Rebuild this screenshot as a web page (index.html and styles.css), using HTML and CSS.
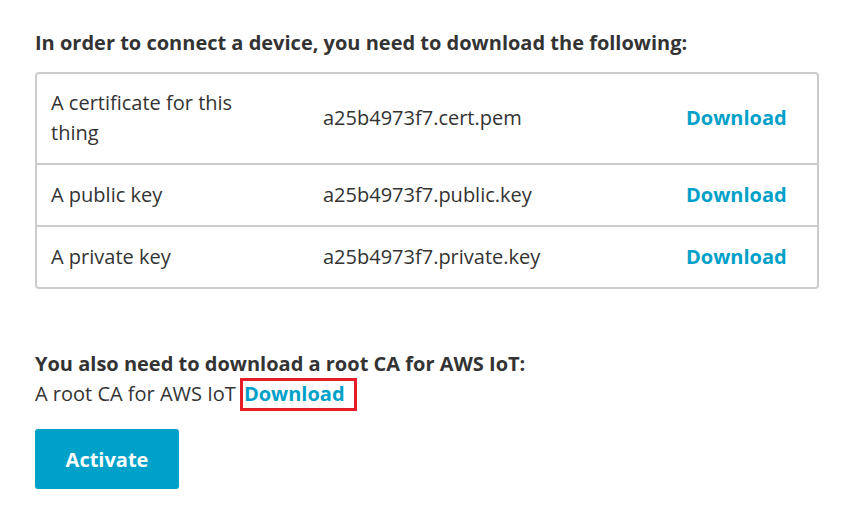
FILE: index.html
```html
<!DOCTYPE html>
<html>
<head>
<meta charset="utf-8">
<link rel="stylesheet" href="styles.css">
</head>
<body>
<div class="page">
  <h2 class="title">In order to connect a device, you need to download the following:</h2>
  <div class="files">
    <div class="row">
      <div class="cell name">A certificate for this thing</div>
      <div class="cell file">a25b4973f7.cert.pem</div>
      <div class="cell act"><a class="link">Download</a></div>
    </div>
    <div class="row">
      <div class="cell name">A public key</div>
      <div class="cell file">a25b4973f7.public.key</div>
      <div class="cell act"><a class="link">Download</a></div>
    </div>
    <div class="row">
      <div class="cell name">A private key</div>
      <div class="cell file">a25b4973f7.private.key</div>
      <div class="cell act"><a class="link">Download</a></div>
    </div>
  </div>
  <h3 class="subtitle">You also need to download a root CA for AWS IoT:</h3>
  <p class="root">A root CA for AWS IoT<a class="link marked">Download</a></p>
  <button class="btn">Activate</button>
</div>
</body>
</html>
```
FILE: styles.css
```css
html, body {
  margin: 0;
  padding: 0;
  background: #fff;
}
body {
  font-family: "Open Sans", "Noto Sans", sans-serif;
  color: #333;
  font-size: 20px;
}
.page {
  padding: 28px 35px 0 35px;
  width: 784px;
}
.title {
  margin: 0;
  font-size: 20px;
  font-weight: 700;
  line-height: 30px;
}
.files {
  margin-top: 14px;
  border: 2px solid #cccccc;
  border-radius: 4px;
}
.row {
  display: grid;
  grid-template-columns: 272px 363px 1fr;
}
.row + .row {
  border-top: 2px solid #cccccc;
}
.cell {
  padding: 15px 14px;
  line-height: 30px;
  display: flex;
  align-items: center;
}
.row:first-child .cell {
  padding-top: 14px;
}
.name {
  padding-right: 50px;
}
.link {
  color: #00a1c9;
  font-weight: 700;
  text-decoration: none;
}
.subtitle {
  margin: 60px 0 0 0;
  font-size: 20px;
  font-weight: 700;
  line-height: 30px;
}
.root {
  margin: -1px 0 0 0;
  line-height: 30px;
}
.marked {
  display: inline-block;
  line-height: 26px;
  vertical-align: baseline;
  margin-left: 4px;
  border: 3px solid #e41e26;
  padding: 0 9px 1px 1px;
}
.btn {
  display: block;
  margin-top: 18px;
  width: 144px;
  height: 60px;
  background: #00a1c9;
  color: #fff;
  border: none;
  border-radius: 3px;
  font-family: inherit;
  font-size: 20px;
  font-weight: 700;
}
```
